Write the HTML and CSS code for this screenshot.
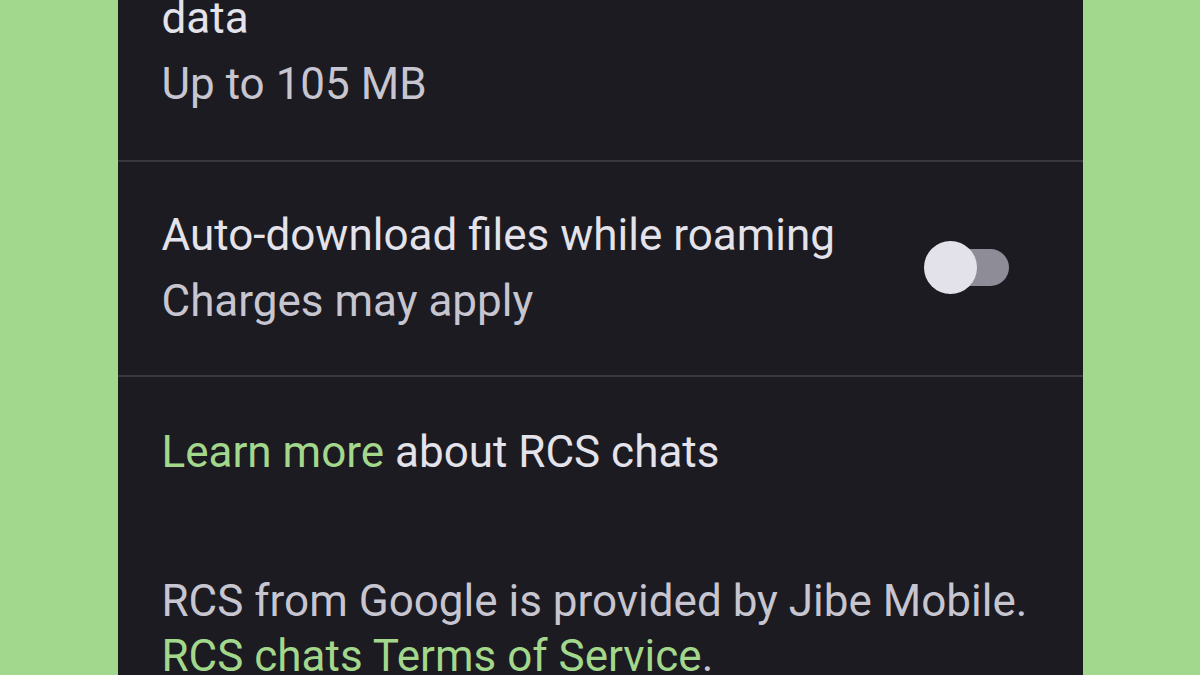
FILE: index.html
```html
<!doctype html>
<html lang="en">

<head>
    <meta charset="utf-8" />
    <meta name="viewport" content="width=device-width, initial-scale=1">
    <link rel="stylesheet" href="styles.css">
</head>

<body>
    <div class="screen">
        <div class="settings">
            <div class="row first">
                <div class="text">
                    <div class="title">data</div>
                    <div class="summary">Up to 105 MB</div>
                </div>
            </div>
            <div class="row roaming">
                <div class="text">
                    <div class="title">Auto-download files while roaming</div>
                    <div class="summary">Charges may apply</div>
                </div>
                <div class="switch">
                    <span class="track"></span>
                    <span class="thumb"></span>
                </div>
            </div>
            <p class="learn"><a href="#">Learn more</a> about RCS chats</p>
            <p class="legal">
                RCS from Google is provided by Jibe Mobile.<br />
                <a href="#">RCS chats Terms of Service</a>.
            </p>
        </div>
    </div>
</body>

</html>
```

FILE: styles.css
```css
html {
    font-family: Roboto, "Noto Sans", Arial, sans-serif;
    font-size: 44px;
}

body {
    margin: 0;
    background: #a1d88e;
    overflow: hidden;
}

.screen {
    height: 675px;
    overflow: hidden;
}

.settings {
    width: 965px;
    margin: -15px auto 0;
    background: #1b1b21;
    min-height: 720px;
    color: #e4e2ea;
}

a {
    color: #a3d78c;
    text-decoration: none;
}

.row {
    display: flex;
    align-items: center;
    padding: 0 74px 0 44px;
    border-bottom: 2px solid #38383f;
}

.row.first {
    padding-bottom: 43px;
}

.row.roaming {
    padding-top: 40px;
    padding-bottom: 41px;
}

.text {
    flex: 1;
}

.title {
    line-height: 66px;
    color: #e4e2ea;
}

.summary {
    line-height: 66px;
    color: #c7c5cf;
}

.switch {
    position: relative;
    width: 85px;
    height: 53px;
    margin-top: -2px;
}

.track {
    position: absolute;
    left: 17px;
    right: 0;
    top: 8px;
    bottom: 8px;
    border-radius: 19px;
    background: #8e8d97;
}

.thumb {
    position: absolute;
    left: 0;
    top: 0;
    width: 53px;
    height: 53px;
    border-radius: 50%;
    background: #e3e1ea;
}

.learn {
    margin: 0;
    padding: 43px 44px 0;
    line-height: 64px;
}

.legal {
    margin: 0;
    padding: 90px 44px 0;
    line-height: 55px;
    color: #c7c5cf;
}
```
